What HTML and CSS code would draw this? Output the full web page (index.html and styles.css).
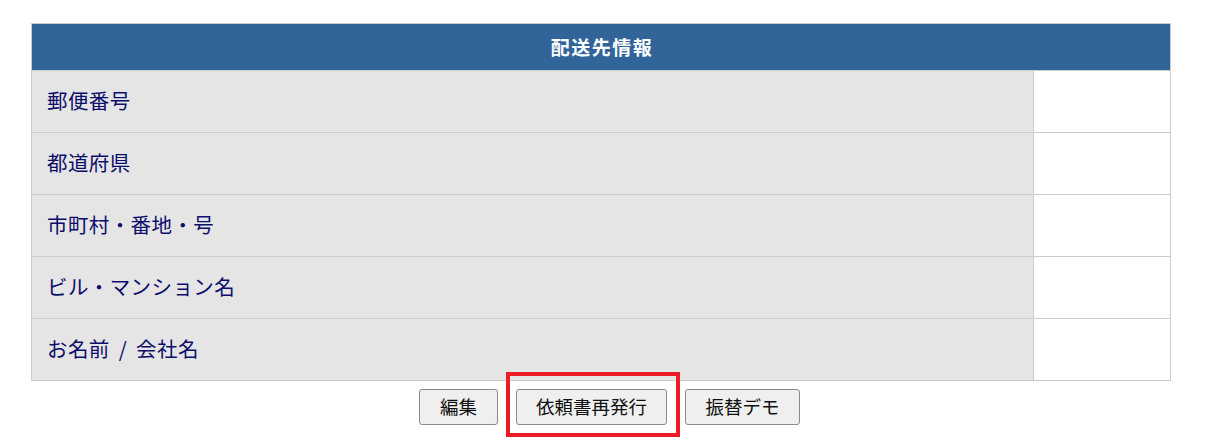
FILE: index.html
```html
<!DOCTYPE html>
<html lang="ja">

<head>
    <meta charset="UTF-8">
    <meta name="viewport" content="width=device-width, initial-scale=1.0">
    <title>配送先情報</title>
    <link rel="stylesheet" href="styles.css">
</head>

<body>

    <div class="container">
        <table class="info-table">
            <thead>
                <tr>
                    <th colspan="2">配送先情報</th>
                </tr>
            </thead>
            <tbody>
                <tr>
                    <td class="label">郵便番号</td>
                    <td class="value"></td>
                </tr>
                <tr>
                    <td class="label">都道府県</td>
                    <td class="value"></td>
                </tr>
                <tr>
                    <td class="label">市町村・番地・号</td>
                    <td class="value"></td>
                </tr>
                <tr>
                    <td class="label">ビル・マンション名</td>
                    <td class="value"></td>
                </tr>
                <tr>
                    <td class="label">お名前 / 会社名</td>
                    <td class="value"></td>
                </tr>
            </tbody>
        </table>

        <div class="actions">
            <button type="button" class="btn btn-edit">編集</button>
            <div class="highlight">
                <button type="button" class="btn btn-reissue">依頼書再発行</button>
            </div>
            <button type="button" class="btn btn-demo">振替デモ</button>
        </div>
    </div>

</body>

</html>
```

FILE: styles.css
```css
html,
body {
    min-height: 446px;
}

body {
    font-family: "Noto Sans CJK JP", "Noto Sans", sans-serif;
    background-color: #fff;
    margin: 0;
    padding: 0;
}

.container {
    width: 1140px;
    margin: 23px 0 0 31px;
    padding-bottom: 20px;
}

.info-table {
    width: 100%;
    border-collapse: collapse;
    border: 1px solid #ccc;
}

.info-table th {
    background-color: #31659a;
    color: #fff;
    font-size: 19px;
    font-weight: bold;
    height: 44px;
    padding: 0 0 2px 2px;
    border: 1px solid #ccc;
    letter-spacing: 1.5px;
}

.info-table td {
    border: 1px solid #ccc;
    height: 58px;
    padding: 0 0 3px;
}

.info-table .label {
    background-color: #e5e5e5;
    color: #0d0d6b;
    font-size: 20.5px;
    letter-spacing: 0.4px;
    word-spacing: 4px;
    padding-left: 15px;
    width: 986px;
}

.info-table .value {
    background-color: #fff;
}

.actions {
    display: flex;
    justify-content: center;
    align-items: center;
    gap: 18px;
    padding-left: 17px;
    margin-top: 8px;
}

.btn {
    font-family: "Noto Sans CJK JP", "Noto Sans", sans-serif;
    font-size: 18.5px;
    color: #111;
    background-color: #efefef;
    border: 1px solid #8a8a8a;
    border-radius: 3px;
    height: 36px;
    padding: 0 0 2px;
    cursor: pointer;
}

.btn-edit {
    width: 79px;
}

.btn-reissue {
    width: 151px;
}

.btn-demo {
    width: 115px;
}

/* red annotation box around the reissue button */
.highlight {
    display: flex;
    border: 4px solid #ed1c24;
    padding: 13px 9px 8px 6px;
    margin: -17px -13px -12px -10px;
}
```
